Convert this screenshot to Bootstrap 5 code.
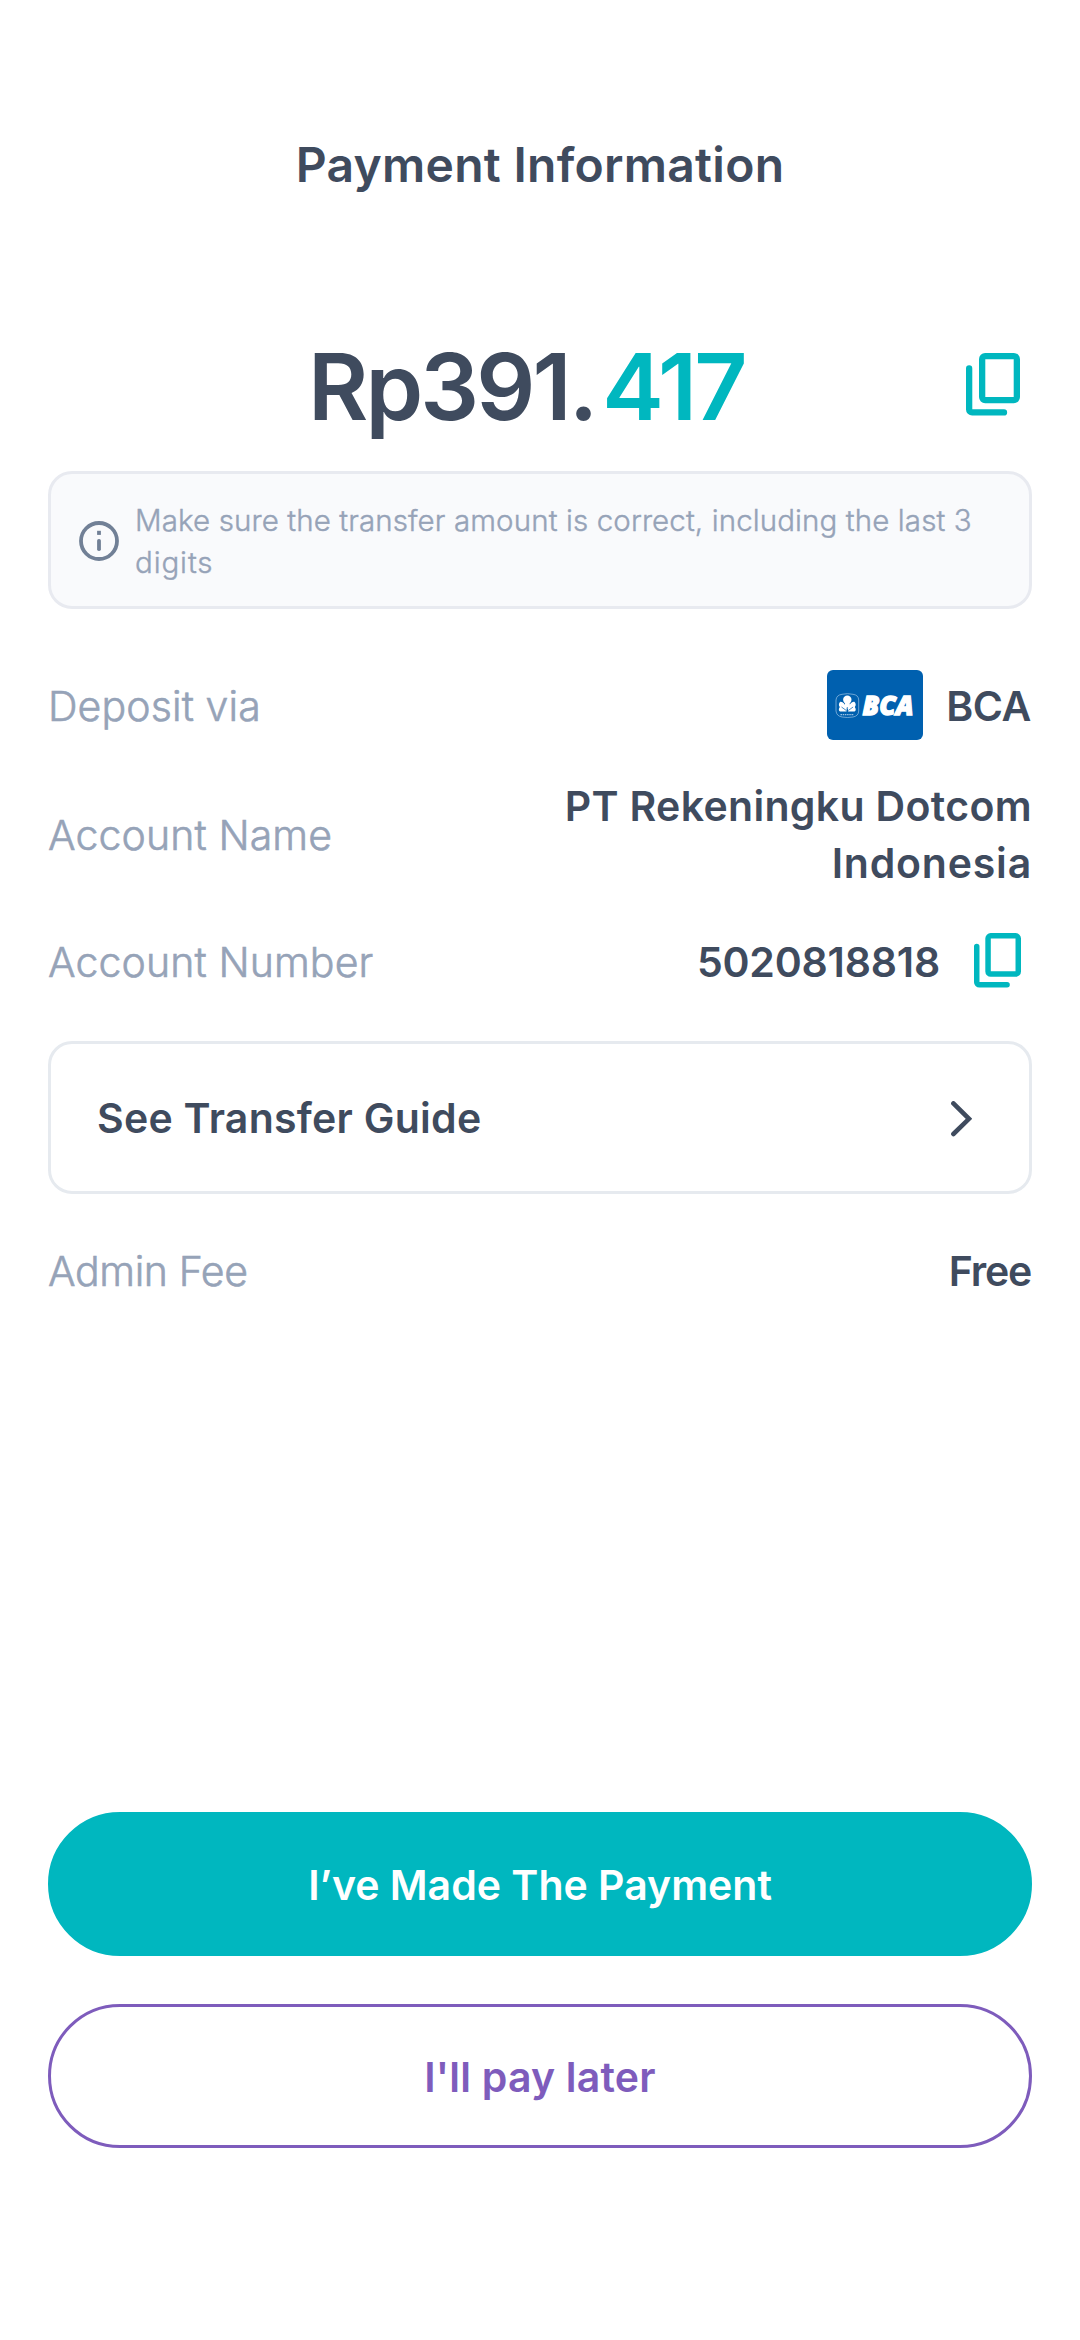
<!DOCTYPE html>
<html lang="en">
<head>
<meta charset="utf-8">
<meta name="viewport" content="width=device-width, initial-scale=1">
<title>Payment Information</title>
<link rel="stylesheet" href="https://cdn.jsdelivr.net/npm/bootstrap@5.3.0/dist/css/bootstrap.min.css">
<style>
  :root { --ink:#3f4b5e; --soft:#96a3b8; --teal:#00b7bf; --violet:#7e5cbc; --line:#e6eaef; }
  body { font-family: Inter, "Noto Sans", sans-serif; color: var(--ink); background: #fff; font-size: 41px; line-height: 57px; }
  .screen { width: 1080px; height: 2340px; padding: 0 48px 192px; }
  .screen svg { display: block; flex: none; }
  .page-title { margin-top: 135px; height: 60px; font-size: 48px; line-height: 60px; font-weight: 600; letter-spacing: .28px; }
  .amount-row { margin-top: 131px; height: 120px; padding-left: 260px; padding-right: 12px; }
  .amount { font-size: 92.5px; line-height: 120px; font-weight: 600; letter-spacing: -2.9px; white-space: nowrap; }
  .amount .tail { color: var(--teal); letter-spacing: -2.9px; margin-left: 7px; }
  .amount-row svg { margin-bottom: 3px; }
  .note { margin-top: 25px; height: 138px; border: 3px solid #e8eaf0; border-radius: 24px; background: #f9fafc; padding: 2px 48px 0 28px; gap: 16px; font-size: 29.5px; line-height: 42px; font-weight: 300; -webkit-text-stroke: .4px var(--soft); letter-spacing: .11px; color: var(--soft); }
  .note .second { letter-spacing: .9px; }
  .line-item { padding-top: 3px; }
  .line-label { color: var(--soft); font-weight: 300; -webkit-text-stroke: .6px var(--soft); letter-spacing: .11px; }
  .line-value { font-weight: 600; text-align: right; white-space: nowrap; }
  .nudge { padding-top: 3px; }
  .guide { margin-top: 50px; height: 153px; border: 3px solid var(--line); border-radius: 24px; padding: 2px 57px 0 46px; font-weight: 600; letter-spacing: .28px; }
  .cta { --bs-btn-font-size: 41px; --bs-btn-font-weight: 600; --bs-btn-line-height: 57px; --bs-btn-border-width: 3px; height: 144px; padding-top: 6px; padding-bottom: 3px; }
  .cta-main { --bs-btn-bg: var(--teal); --bs-btn-border-color: var(--teal); --bs-btn-color: #fff; }
  .cta-later { --bs-btn-border-color: var(--violet); --bs-btn-color: var(--violet); letter-spacing: .2px; }
</style>
<script src="https://cdn.jsdelivr.net/npm/bootstrap@5.3.0/dist/js/bootstrap.bundle.min.js"></script>
</head>
<body>
<svg width="0" height="0" class="d-none">
  <symbol id="copy" viewBox="0 0 54 63">
    <g fill="none" stroke="#00b7bf" stroke-width="6.3">
      <rect x="16.15" y="3.15" width="34.7" height="43.9" rx="3"/>
      <path d="M3.15 15.5V56.4a3 3 0 0 0 3 3H38" stroke-linecap="round"/>
    </g>
  </symbol>
</svg>
<main class="screen d-flex flex-column overflow-hidden">
  <h1 class="page-title text-center mb-0">Payment Information</h1>

  <section class="amount-row d-flex align-items-center justify-content-between">
    <div class="amount">Rp391.<span class="tail">417</span></div>
    <svg width="54" height="63" role="img" aria-label="Copy amount"><use href="#copy"/></svg>
  </section>

  <div class="note d-flex align-items-center">
    <svg width="40" height="40" viewBox="0 0 40 40">
      <circle cx="20" cy="20" r="18" fill="none" stroke="#718096" stroke-width="3.8"/>
      <rect x="18.1" y="9.8" width="3.8" height="4.1" fill="#718096"/>
      <rect x="18.1" y="18" width="3.8" height="12" rx="1.7" fill="#718096"/>
    </svg>
    <div>Make sure the transfer amount is correct, including the last 3 <span class="second">digits</span></div>
  </div>

  <div class="line-item d-flex align-items-center justify-content-between" style="margin-top:58px">
    <div class="line-label nudge">Deposit via</div>
    <div class="line-value d-flex align-items-center">
      <svg width="96" height="70" viewBox="0 0 96 70" class="me-4">
        <rect width="96" height="70" rx="6" fill="#0060af"/>
        <path d="M15 24.3Q20.500 23 26 24.300Q31.500 25 31.700 30V41Q31.500 46 26 47Q20.500 48 15 47Q9.500 46 9 41V30Q9.500 25 15 24.300Z" fill="none" stroke="#9cc3e4" stroke-width=".7"/>
        <g fill="#fff">
          <circle cx="20.300" cy="29.700" r="4.200"/>
          <path d="M20.300 39C16.500 37 17 33 20.300 30C23.600 33 24.100 37 20.300 39Z"/>
          <path d="M19.800 39Q17 31 13.200 31.800Q10.800 34.500 12.800 37Q10.800 40 13 41.500H19.500Z"/>
          <path d="M20.800 39Q23.600 31 27.400 31.800Q29.800 34.500 27.800 37Q29.800 40 27.600 41.500H21.100Z"/>
        </g>
        <path d="M20.300 41V37M19.300 40.500L14.500 37M21.300 40.500L26.100 37" stroke="#0060af" stroke-width=".7"/>
        <path d="M13.500 44.600H27" stroke="#9cc3e4" stroke-width="1.200" stroke-dasharray="1.500 .7"/>
        <text x="35.500" y="45.200" font-family="Open Sans, sans-serif" font-weight="800" font-style="italic" font-size="27" textLength="51" lengthAdjust="spacingAndGlyphs" fill="#fff" stroke="#fff" stroke-width="1.300">BCA</text>
      </svg>
      <span class="nudge" style="letter-spacing:-.4px;margin-left:-1px;padding-right:1px">BCA</span>
    </div>
  </div>

  <div class="line-item d-flex align-items-center justify-content-between" style="margin-top:35px">
    <div class="line-label">Account Name</div>
    <div class="line-value" style="letter-spacing:.33px">PT Rekeningku Dotcom<br><span style="letter-spacing:.8px">Indonesia</span></div>
  </div>

  <div class="line-item d-flex align-items-center justify-content-between" style="margin-top:38px">
    <div class="line-label">Account Number</div>
    <div class="line-value d-flex align-items-center" style="letter-spacing:-.2px;padding-right:11px">
      5020818818
      <svg width="47" height="55" viewBox="0 0 54 63" role="img" aria-label="Copy account number" style="margin:0 0 3px 34px"><use href="#copy"/></svg>
    </div>
  </div>

  <a href="#" class="guide d-flex align-items-center justify-content-between text-reset text-decoration-none">
    <span>See Transfer Guide</span>
    <svg width="21" height="36" viewBox="0 0 21 36"><path d="M2.400 2.400L18 17.800L2.400 33" fill="none" stroke="#3f4b5e" stroke-width="4.600" stroke-linecap="round"/></svg>
  </a>

  <div class="line-item d-flex align-items-center justify-content-between" style="margin-top:46px">
    <div class="line-label" style="letter-spacing:-.4px">Admin Fee</div>
    <div class="line-value" style="letter-spacing:-1.2px;padding-right:1px">Free</div>
  </div>

  <div class="mt-auto d-grid gap-5">
    <button type="button" class="btn cta cta-main rounded-pill">I’ve Made The Payment</button>
    <button type="button" class="btn cta cta-later rounded-pill">I'll pay later</button>
  </div>
</main>
</body>
</html>
